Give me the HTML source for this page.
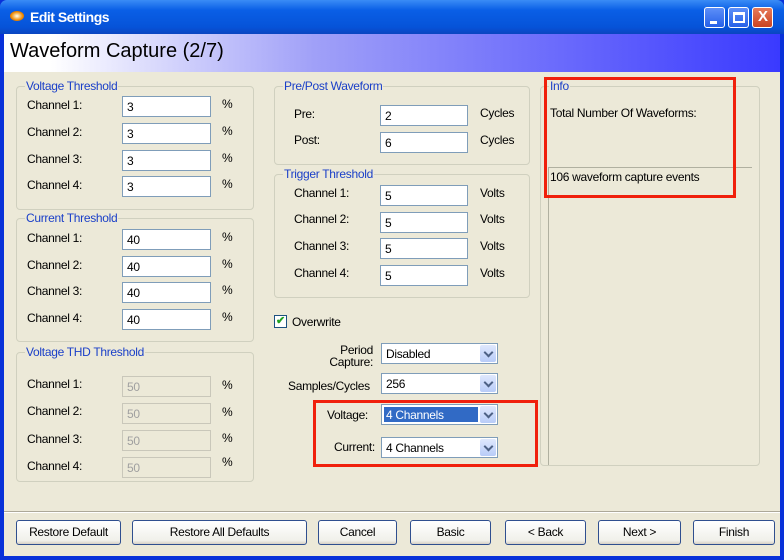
<!DOCTYPE html>
<html><head><meta charset="utf-8"><style>
*{box-sizing:border-box;margin:0;padding:0}
body{width:784px;height:560px;overflow:hidden;font-family:"Liberation Sans",sans-serif;font-size:12px;letter-spacing:-0.3px;color:#000;position:relative;background:#0831d9}
.a{position:absolute}
#title{left:0;top:0;width:784px;height:34px;background:linear-gradient(#3a8cf6,#0a5fe6 30%,#0653d8 80%,#0a45c0);border-radius:7px 7px 0 0}
#title span{position:absolute;left:30px;top:9px;color:#fff;font-weight:bold;font-size:14px;letter-spacing:-0.5px}
#win{left:4px;top:34px;width:776px;height:522px;background:#ece9d8}
#hdr{left:4px;top:34px;width:776px;height:38px;background:linear-gradient(90deg,#fff 0%,#fff 6%,#a0a0f8 40%,#3a3aff 100%);}
#hdr span{position:absolute;left:6px;top:6px;font-size:20px;letter-spacing:0}
.g{position:absolute;border:1px solid #d0d0bf;border-radius:4px}
.gl{position:absolute;top:-8px;left:8px;background:#ece9d8;color:#1a3fc8;padding:0 1px;font-size:12px}
.l{position:absolute;font-size:12px}
.i{position:absolute;background:#fff;border:1px solid #7f9db9;height:21px;padding:3px 0 0 4px;font-size:12px}
.d{background:#ece9d8;border-color:#c9c7ba;color:#a0a0a0}
.c{position:absolute;background:#fff;border:1px solid #7f9db9;height:21px;padding:3px 0 0 4px;font-size:12px}
.c b{position:absolute;right:1px;top:1px;width:16px;height:17px;background:linear-gradient(#dfe8fd,#b8ccf8);border-radius:2px}
.c b:after{content:"";position:absolute;left:5px;top:4px;width:5px;height:5px;border-right:2px solid #4d6185;border-bottom:2px solid #4d6185;transform:rotate(45deg)}
.btn{position:absolute;top:520px;height:25px;border:1px solid #2f4f8f;border-radius:3px;background:linear-gradient(#fff,#f0f0ea 85%,#d6d0c5);text-align:center;line-height:23px;font-size:12px}
.red{position:absolute;border:3px solid #f0200c}
.tb{position:absolute;top:7px;width:21px;height:21px;border:1px solid #fff;border-radius:3px;background:linear-gradient(#5d8ff8,#2660e8)}
</style></head><body>
<div id="title" class="a"><div class="a" style="left:10px;top:11px;width:14px;height:10px;border-radius:50%;background:radial-gradient(#ffe,#e80 60%,#a40)"></div><span>Edit Settings</span>
<div class="tb" style="left:704px"><div class="a" style="left:5px;top:13px;width:7px;height:3px;background:#fff"></div></div>
<div class="tb" style="left:728px"><div class="a" style="left:4px;top:4px;width:12px;height:11px;border:2px solid #fff;border-top-width:3px"></div></div>
<div class="tb" style="left:752px;background:linear-gradient(#e77a5a,#c94220)"><div class="a" style="left:5px;top:0px;color:#fff;font-weight:bold;font-size:15px">X</div></div>
</div>
<div id="win" class="a"></div>
<div id="hdr" class="a"><span>Waveform Capture (2/7)</span></div>

<div class="g" style="left:16px;top:86px;width:238px;height:124px"><div class="gl">Voltage Threshold</div></div>
<div class="l" style="left:27px;top:98px">Channel 1:</div><div class="i" style="left:122px;top:96px;width:89px">3</div><div class="l" style="left:222px;top:97px">%</div>
<div class="l" style="left:27px;top:125px">Channel 2:</div><div class="i" style="left:122px;top:123px;width:89px">3</div><div class="l" style="left:222px;top:124px">%</div>
<div class="l" style="left:27px;top:152px">Channel 3:</div><div class="i" style="left:122px;top:150px;width:89px">3</div><div class="l" style="left:222px;top:151px">%</div>
<div class="l" style="left:27px;top:178px">Channel 4:</div><div class="i" style="left:122px;top:176px;width:89px">3</div><div class="l" style="left:222px;top:177px">%</div>

<div class="g" style="left:16px;top:218px;width:238px;height:124px"><div class="gl">Current Threshold</div></div>
<div class="l" style="left:27px;top:231px">Channel 1:</div><div class="i" style="left:122px;top:229px;width:89px">40</div><div class="l" style="left:222px;top:230px">%</div>
<div class="l" style="left:27px;top:258px">Channel 2:</div><div class="i" style="left:122px;top:256px;width:89px">40</div><div class="l" style="left:222px;top:257px">%</div>
<div class="l" style="left:27px;top:284px">Channel 3:</div><div class="i" style="left:122px;top:282px;width:89px">40</div><div class="l" style="left:222px;top:283px">%</div>
<div class="l" style="left:27px;top:311px">Channel 4:</div><div class="i" style="left:122px;top:309px;width:89px">40</div><div class="l" style="left:222px;top:310px">%</div>

<div class="g" style="left:16px;top:352px;width:238px;height:130px"><div class="gl">Voltage THD Threshold</div></div>
<div class="l" style="left:27px;top:377px">Channel 1:</div><div class="i d" style="left:122px;top:376px;width:89px">50</div><div class="l" style="left:222px;top:378px">%</div>
<div class="l" style="left:27px;top:404px">Channel 2:</div><div class="i d" style="left:122px;top:403px;width:89px">50</div><div class="l" style="left:222px;top:405px">%</div>
<div class="l" style="left:27px;top:432px">Channel 3:</div><div class="i d" style="left:122px;top:430px;width:89px">50</div><div class="l" style="left:222px;top:431px">%</div>
<div class="l" style="left:27px;top:459px">Channel 4:</div><div class="i d" style="left:122px;top:457px;width:89px">50</div><div class="l" style="left:222px;top:455px">%</div>

<div class="g" style="left:274px;top:86px;width:256px;height:79px"><div class="gl">Pre/Post Waveform</div></div>
<div class="l" style="left:294px;top:107px">Pre:</div><div class="i" style="left:380px;top:105px;width:88px">2</div><div class="l" style="left:480px;top:106px">Cycles</div>
<div class="l" style="left:294px;top:133px">Post:</div><div class="i" style="left:380px;top:132px;width:88px">6</div><div class="l" style="left:480px;top:133px">Cycles</div>

<div class="g" style="left:274px;top:174px;width:256px;height:124px"><div class="gl">Trigger Threshold</div></div>
<div class="l" style="left:294px;top:186px">Channel 1:</div><div class="i" style="left:380px;top:185px;width:88px">5</div><div class="l" style="left:480px;top:186px">Volts</div>
<div class="l" style="left:294px;top:212px">Channel 2:</div><div class="i" style="left:380px;top:212px;width:88px">5</div><div class="l" style="left:480px;top:212px">Volts</div>
<div class="l" style="left:294px;top:239px">Channel 3:</div><div class="i" style="left:380px;top:238px;width:88px">5</div><div class="l" style="left:480px;top:239px">Volts</div>
<div class="l" style="left:294px;top:266px">Channel 4:</div><div class="i" style="left:380px;top:265px;width:88px">5</div><div class="l" style="left:480px;top:266px">Volts</div>

<div class="a" style="left:274px;top:315px;width:13px;height:13px;border:1px solid #1c5180;background:#fff;color:#21a121;font-size:11px;line-height:11px;text-align:center;font-weight:bold">✔</div>
<div class="l" style="left:292px;top:315px">Overwrite</div>

<div class="l" style="left:300px;top:344px;width:73px;text-align:right;line-height:12px">Period<br>Capture:</div>
<div class="c" style="left:381px;top:343px;width:117px">Disabled<b></b></div>
<div class="l" style="left:288px;top:379px">Samples/Cycles</div>
<div class="c" style="left:381px;top:373px;width:117px">256<b></b></div>
<div class="l" style="left:327px;top:408px">Voltage:</div>
<div class="c" style="left:381px;top:404px;width:117px"><span style="position:absolute;left:2px;top:2px;width:94px;height:15px;background:#316ac5;color:#fff;padding:1px 0 0 2px">4 Channels</span><b></b></div>
<div class="l" style="left:334px;top:440px">Current:</div>
<div class="c" style="left:381px;top:437px;width:117px">4 Channels<b></b></div>
<div class="red" style="left:313px;top:400px;width:225px;height:67px"></div>

<div class="g" style="left:540px;top:86px;width:220px;height:380px"><div class="gl">Info</div></div>
<div class="l" style="left:550px;top:106px">Total Number Of Waveforms:</div>
<div class="a" style="left:548px;top:167px;width:204px;height:298px;border:1px solid #b0b0a0;border-right:none;border-bottom:none"></div>
<div class="l" style="left:550px;top:170px">106 waveform capture events</div>
<div class="red" style="left:544px;top:77px;width:192px;height:121px"></div>

<div class="a" style="left:4px;top:511px;width:776px;height:1px;background:#aca899"></div>
<div class="a" style="left:4px;top:512px;width:776px;height:1px;background:#fff"></div>

<div class="btn" style="left:16px;width:105px">Restore Default</div>
<div class="btn" style="left:132px;width:175px">Restore All Defaults</div>
<div class="btn" style="left:318px;width:79px">Cancel</div>
<div class="btn" style="left:410px;width:81px">Basic</div>
<div class="btn" style="left:505px;width:81px">&lt; Back</div>
<div class="btn" style="left:598px;width:83px">Next &gt;</div>
<div class="btn" style="left:693px;width:82px">Finish</div>
</body></html>
